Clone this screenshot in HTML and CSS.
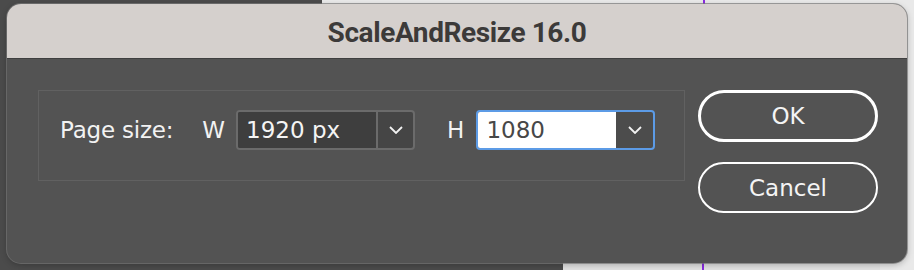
FILE: index.html
```html
<!DOCTYPE html>
<html lang="en">
<head>
    <meta charset="UTF-8">
    <meta name="viewport" content="width=device-width, initial-scale=1.0">
    <title>ScaleAndResize 16.0</title>
    <link rel="stylesheet" href="styles.css">
</head>
<body>
    <div class="desk">
        <div class="backdrop backdrop-top"><span class="guide"></span></div>
        <div class="backdrop backdrop-bottom"><span class="guide"></span></div>
        <div class="backdrop backdrop-side"></div>

        <div class="dialog">
            <div class="titlebar">ScaleAndResize 16.0</div>
            <div class="dialog-body">
                <div class="group">
                    <div class="field-row">
                        <span class="label">Page size:</span>
                        <span class="axis axis-w">W</span>
                        <div class="combo">
                            <span class="combo-value">1920 px</span>
                            <span class="combo-arrow">
                                <svg width="14" height="8" viewBox="0 0 14 8"><path d="M1 1 L7 7 L13 1" fill="none" stroke="#f2f2f2" stroke-width="1.8"/></svg>
                            </span>
                        </div>
                        <span class="axis axis-h">H</span>
                        <div class="combo combo-focus">
                            <span class="combo-value">1080</span>
                            <span class="combo-arrow">
                                <svg width="14" height="8" viewBox="0 0 14 8"><path d="M1 1 L7 7 L13 1" fill="none" stroke="#f2f2f2" stroke-width="1.8"/></svg>
                            </span>
                        </div>
                    </div>
                </div>
                <div class="actions">
                    <button class="btn btn-default">OK</button>
                    <button class="btn">Cancel</button>
                </div>
            </div>
        </div>
    </div>
</body>
</html>
```

FILE: styles.css
```css
body {
    margin: 0;
    background: #4b4b4b;
    font-family: "DejaVu Sans", "Liberation Sans", sans-serif;
}
.desk {
    position: relative;
    width: 914px;
    height: 270px;
    overflow: hidden;
}
.backdrop {
    position: absolute;
    background: #e9e9e9;
}
.backdrop-top {
    left: 322px;
    top: 0;
    right: 0;
    height: 40px;
    border-bottom: 1px solid #c4c4c4;
}
.backdrop-bottom {
    left: 563px;
    top: 230px;
    right: 0;
    bottom: 0;
    background: #e2e2e2;
}
.backdrop-side {
    left: 880px;
    top: 0;
    right: 0;
    bottom: 0;
}
.guide {
    position: absolute;
    top: 0;
    bottom: 0;
    width: 2px;
    background: #8a2be2;
}
.backdrop-top .guide {
    left: 381px;
}
.backdrop-bottom .guide {
    left: 139px;
}
.dialog {
    position: absolute;
    left: 7px;
    top: 4px;
    width: 900px;
    height: 259px;
    border-radius: 14px;
    background: #535353;
    overflow: hidden;
    box-shadow: 0 0 0 1px rgba(120, 120, 120, 0.7), 0 2px 6px rgba(0, 0, 0, 0.25);
}
.titlebar {
    height: 55px;
    display: flex;
    align-items: center;
    justify-content: center;
    padding-top: 2px;
    box-sizing: border-box;
    background: #d5d0cd;
    border-bottom: 1px solid #3f3f3f;
    color: #3c3a39;
    font-family: Roboto, "Liberation Sans", sans-serif;
    font-weight: 700;
    font-size: 28px;
    letter-spacing: -0.4px;
}
.dialog-body {
    display: flex;
    padding: 31px 0 0 31px;
}
.group {
    width: 647px;
    height: 91px;
    box-sizing: border-box;
    border: 1px solid #616161;
    padding: 19px 0 0 21px;
}
.field-row {
    display: flex;
    align-items: center;
    height: 40px;
}
.label, .axis {
    color: #f2f2f2;
    font-size: 23px;
}
.label {
    letter-spacing: -0.2px;
}
.axis-w {
    margin-left: 29px;
    margin-right: 11px;
}
.axis-h {
    margin-left: 32px;
    margin-right: 12px;
}
.combo {
    display: flex;
    width: 179px;
    height: 40px;
    box-sizing: border-box;
    border: 2px solid #6b6b6b;
    border-radius: 4px;
    overflow: hidden;
    background: #454545;
}
.combo-value {
    flex: 1;
    display: flex;
    align-items: center;
    padding-left: 8px;
    background: #3e3e3e;
    border-right: 2px solid #6b6b6b;
    color: #f4f4f4;
    font-size: 23px;
}
.combo-arrow {
    width: 35px;
    display: flex;
    align-items: center;
    justify-content: center;
}
.combo-focus {
    border-color: #5c9be6;
    background: #4c4c4c;
}
.combo-focus .combo-value {
    background: #ffffff;
    color: #474747;
    border-right: none;
}
.combo-focus .combo-arrow {
    width: 37px;
}
.actions {
    display: flex;
    flex-direction: column;
    gap: 20px;
    margin-left: 13px;
    width: 180px;
}
.btn {
    height: 51px;
    border: 2px solid #ffffff;
    border-radius: 26px;
    background: transparent;
    color: #f4f4f4;
    font-family: "DejaVu Sans", "Liberation Sans", sans-serif;
    font-size: 23px;
    padding: 0;
}
.btn-default {
    height: 52px;
    border-width: 3px;
}
```
